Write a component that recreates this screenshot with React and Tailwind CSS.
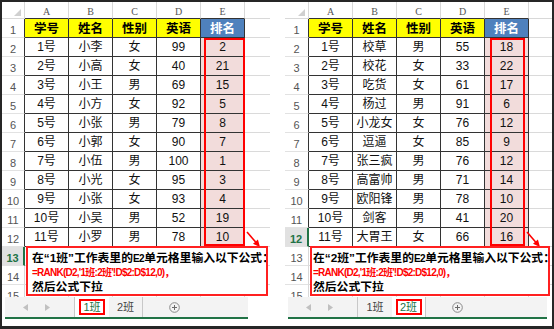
import React from 'react';

const LEFT_ROWS = [
  ['1号', '小李', '女', '99', '2'],
  ['2号', '小高', '女', '40', '21'],
  ['3号', '小王', '男', '69', '15'],
  ['4号', '小方', '女', '92', '5'],
  ['5号', '小张', '男', '79', '8'],
  ['6号', '小郭', '女', '90', '7'],
  ['7号', '小伍', '男', '100', '1'],
  ['8号', '小光', '女', '95', '3'],
  ['9号', '小张', '女', '93', '4'],
  ['10号', '小吴', '男', '52', '19'],
  ['11号', '小罗', '男', '78', '10'],
];

const RIGHT_ROWS = [
  ['1号', '校草', '男', '55', '18'],
  ['2号', '校花', '女', '33', '22'],
  ['3号', '吃货', '女', '61', '17'],
  ['4号', '杨过', '男', '91', '6'],
  ['5号', '小龙女', '女', '76', '12'],
  ['6号', '逗逼', '女', '85', '9'],
  ['7号', '张三疯', '男', '76', '12'],
  ['8号', '高富帅', '男', '71', '14'],
  ['9号', '欧阳锋', '男', '78', '10'],
  ['10号', '剑客', '男', '41', '20'],
  ['11号', '大胃王', '女', '66', '16'],
];

const COLS = ['A', 'B', 'C', 'D', 'E'];
const HEAD = ['学号', '姓名', '性别', '英语', '排名'];

// 红色箭头，从排名列指向说明框
const Arrow = ({ className }) => (
  <svg className={className} width="25" height="25" viewBox="0 0 25 25">
    <line x1="5" y1="5" x2="13.6" y2="14.9" stroke="#ff0000" strokeWidth="1.6" />
    <polygon points="18,20 15.9,12.6 11,16.8" fill="#ff0000" />
  </svg>
);

const Sheet = ({ rows, hdrW, selRow, rectClass, boxClass, textPad, arrowClass, barW, active }) => {
  const rowNums = Array.from({ length: 15 }, (_, i) => i + 1);

  return (
    <div className="flex flex-col h-full shrink-0">
      {/* 表格区域 */}
      <div className="relative h-[295px] overflow-hidden">
        <div className="flex h-[17px]">
          <div className={`${hdrW} shrink-0 flex items-end justify-end pr-[3px] pb-[2px] border-r border-b border-[#d8d8d8]`}>
            <svg width="7" height="7" viewBox="0 0 7 7">
              <polygon points="7,0 7,7 0,7" fill="#d0d0d0" />
            </svg>
          </div>
          {COLS.map((c) => (
            <div
              key={c}
              className="w-[44px] shrink-0 flex items-center justify-center pt-[2px] text-[10px] text-[#555] font-['Liberation_Serif',serif] border-r border-[#d8d8d8] border-b border-b-[#333]"
            >
              {c}
            </div>
          ))}
          <div className="flex-1 border-b border-[#d8d8d8]" />
        </div>

        {rowNums.map((n) => {
          const inTable = n <= 12;
          const sel = n === selRow;
          const data = n >= 2 && n <= 12 ? rows[n - 2] : null;
          return (
            <div key={n} className="flex h-[19px]">
              <div
                className={`${hdrW} shrink-0 flex items-center justify-center pt-[4px] text-[11px] font-['Liberation_Sans',sans-serif] border-b border-[#e2e2e2] ${
                  sel
                    ? 'bg-[#e1e1e1] text-[#217346] font-bold border-r-2 border-r-[#217346]'
                    : inTable
                    ? 'text-[#555] border-r border-r-[#333]'
                    : 'text-[#555] border-r border-r-[#d8d8d8]'
                }`}
              >
                {n}
              </div>
              {COLS.map((c, j) => {
                if (!inTable) {
                  return <div key={c} className="w-[44px] shrink-0 border-r border-b border-[#dadada]" />;
                }
                if (n === 1) {
                  return (
                    <div
                      key={c}
                      className={`w-[44px] shrink-0 flex items-center justify-center text-[12.5px] font-bold font-['Noto_Sans_CJK_SC',sans-serif] border-r border-b border-[#333] ${
                        j === 4 ? 'bg-[#4f81bd] text-white' : 'bg-[#ffff00] text-black'
                      }`}
                    >
                      {HEAD[j]}
                    </div>
                  );
                }
                return (
                  <div
                    key={c}
                    className={`w-[44px] shrink-0 flex items-center justify-center text-[12px] text-[#111] font-['Liberation_Sans','Noto_Sans_CJK_SC',sans-serif] border-r border-b border-[#333] ${
                      j === 4 ? 'bg-[#f2dcdb]' : 'bg-white'
                    }`}
                  >
                    {data[j]}
                  </div>
                );
              })}
              <div className="flex-1 border-b border-[#dadada]" />
            </div>
          );
        })}

        {/* 排名列的红框 */}
        <div className={`absolute top-[36px] h-[208px] border-2 border-[#ff0000] ${rectClass}`} />

        <Arrow className={`absolute top-[225px] ${arrowClass}`} />

        {/* 说明框 */}
        <div className={`absolute top-[244px] h-[50px] bg-white border-2 border-[#ff2020] overflow-hidden whitespace-nowrap ${boxClass}`}>
          <div className={`${textPad} pt-[2px] flex flex-col font-bold font-['Liberation_Sans','Noto_Sans_CJK_SC',sans-serif] text-black`}>
            <div className="h-[16px] leading-[16px] text-[11.8px]">
              在“{active === 1 ? '1班' : '2班'}”工作表里的
              <span className="text-[10px] tracking-[-0.5px]">E2</span>
              单元格里输入以下公式：
            </div>
            <div className="h-[14px] leading-[14px] text-[10px] tracking-[-0.75px] text-[#ff0000]">
              =RANK(D2,'1班:2班'!D$2:D$12,0)，
            </div>
            <div className="h-[14px] leading-[14px] text-[11.8px]">然后公式下拉</div>
          </div>
        </div>
      </div>

      {/* 工作表标签栏 */}
      <div className={`ml-[3px] ${barW} h-[20px] bg-[#f3f3f3] flex items-center text-[11px] font-['Liberation_Sans','Noto_Sans_CJK_SC',sans-serif]`}>
        <div className="w-[70px] h-full flex items-center pl-[18px] gap-[17px] border-r border-[#c8c8c8]">
          <svg width="5" height="7" viewBox="0 0 5 7">
            <polygon points="5,0 5,7 0,3.5" fill="#c0c0c0" />
          </svg>
          <svg width="5" height="7" viewBox="0 0 5 7">
            <polygon points="0,0 0,7 5,3.5" fill="#c0c0c0" />
          </svg>
        </div>
        {[1, 2].map((t) => (
          <div
            key={t}
            className={`w-[34px] h-full flex items-center justify-center ${
              t === active ? 'bg-white text-[#217346]' : 'text-[#444]'
            } ${t === 2 ? 'border-r border-[#c8c8c8]' : ''}`}
          >
            <span
              className={`h-[16px] w-[26px] flex items-center justify-center ${
                t === active ? 'border-2 border-[#ff0000]' : ''
              }`}
            >
              {t}班
            </span>
          </div>
        ))}
        <div className="w-[62px] flex justify-center">
          <svg width="11" height="11" viewBox="0 0 11 11">
            <circle cx="5.5" cy="5.5" r="4.8" fill="none" stroke="#8a8a8a" strokeWidth="1" />
            <line x1="5.5" y1="3" x2="5.5" y2="8" stroke="#6a6a6a" strokeWidth="1" />
            <line x1="3" y1="5.5" x2="8" y2="5.5" stroke="#6a6a6a" strokeWidth="1" />
          </svg>
        </div>
      </div>
      <div className={`ml-[3px] ${barW} h-[2px] bg-[#217346]`} />
    </div>
  );
};

const App = () => {
  return (
    <div className="w-[554px] h-[329px] bg-white border-t-2 border-b-[3px] border-x-2 border-[#262626] flex gap-[15px] overflow-hidden">
      <div className="w-[268px] h-full">
        <Sheet
          rows={LEFT_ROWS}
          hdrW="w-[23px]"
          selRow={13}
          rectClass="left-[202px] w-[41px]"
          boxClass="left-[24px] w-[242px]"
          textPad="pl-[4px]"
          arrowClass="left-[240px]"
          barW="w-[243px]"
          active={1}
        />
      </div>
      <div className="w-[267px] h-full">
        <Sheet
          rows={RIGHT_ROWS}
          hdrW="w-[24px]"
          selRow={12}
          rectClass="left-[205px] w-[35px]"
          boxClass="left-[25px] w-[240px]"
          textPad="pl-[1px]"
          arrowClass="left-[237px]"
          barW="w-[259px]"
          active={2}
        />
      </div>
    </div>
  );
};

export default App;
